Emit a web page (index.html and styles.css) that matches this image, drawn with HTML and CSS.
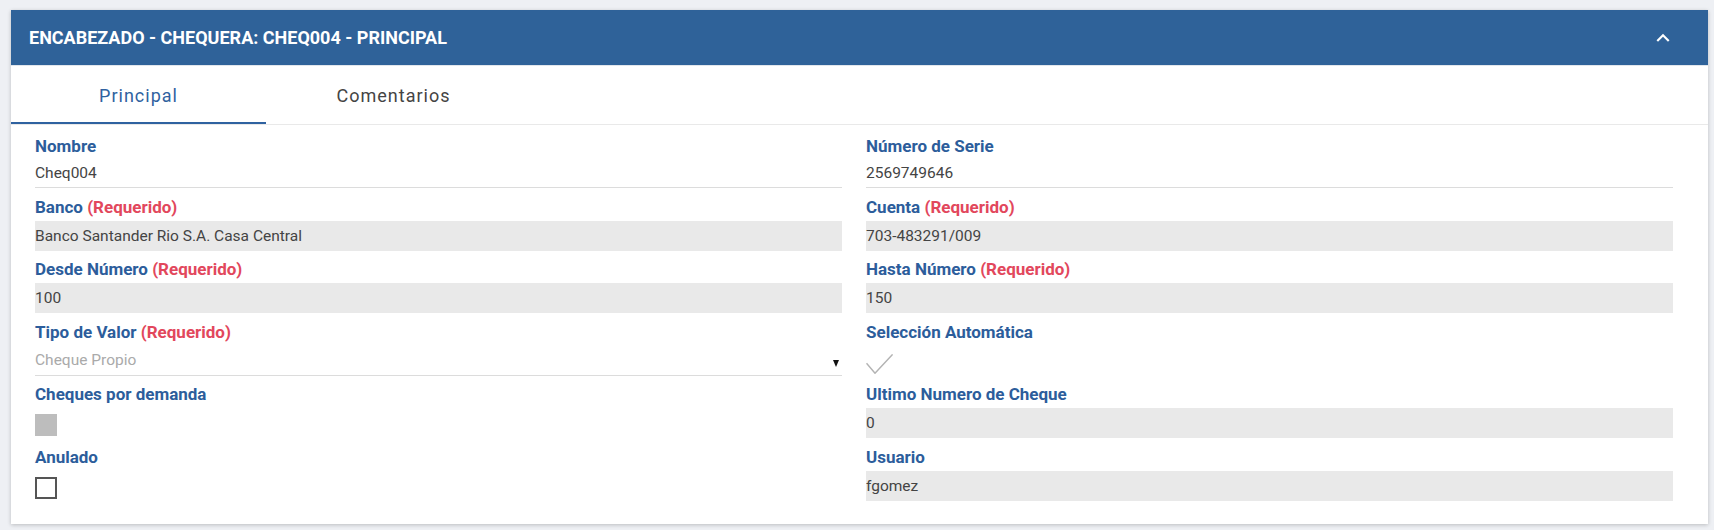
FILE: index.html
```html
<!DOCTYPE html>
<html lang="es">
<head>
<meta charset="utf-8">
<title>Chequera</title>
<link rel="stylesheet" href="styles.css">
</head>
<body>
<div class="page">
  <div class="card">
    <div class="card-header">
      <span class="title">ENCABEZADO - CHEQUERA: CHEQ004 - PRINCIPAL</span>
      <svg class="chev" viewBox="0 0 24 24"><path d="M12 8l-6 6 1.41 1.41L12 10.83l4.59 4.58L18 14z"/></svg>
    </div>
    <div class="tabs">
      <div class="tab active">Principal</div>
      <div class="tab">Comentarios</div>
    </div>
    <div class="form">
      <div class="field">
        <div class="label">Nombre</div>
        <div class="input-line">Cheq004</div>
      </div>
      <div class="field">
        <div class="label">Número de Serie</div>
        <div class="input-line">2569749646</div>
      </div>

      <div class="field">
        <div class="label">Banco <span class="req">(Requerido)</span></div>
        <div class="box">Banco Santander Rio S.A. Casa Central</div>
      </div>
      <div class="field">
        <div class="label">Cuenta <span class="req">(Requerido)</span></div>
        <div class="box">703-483291/009</div>
      </div>

      <div class="field">
        <div class="label">Desde Número <span class="req">(Requerido)</span></div>
        <div class="box">100</div>
      </div>
      <div class="field">
        <div class="label">Hasta Número <span class="req">(Requerido)</span></div>
        <div class="box">150</div>
      </div>

      <div class="field">
        <div class="label">Tipo de Valor <span class="req">(Requerido)</span></div>
        <div class="select"><span>Cheque Propio</span><span class="arrow"></span></div>
      </div>
      <div class="field">
        <div class="label">Selección Automática</div>
        <div class="slot slot-check">
          <svg class="check" viewBox="0 0 27 20"><polyline points="0.5,9.3 9,19.2 26.6,0.4"/></svg>
        </div>
      </div>

      <div class="field">
        <div class="label">Cheques por demanda</div>
        <div class="slot slot-cb"><div class="cb-disabled"></div></div>
      </div>
      <div class="field">
        <div class="label">Ultimo Numero de Cheque</div>
        <div class="box">0</div>
      </div>

      <div class="field">
        <div class="label">Anulado</div>
        <div class="slot slot-cb"><div class="cb"></div></div>
      </div>
      <div class="field">
        <div class="label">Usuario</div>
        <div class="box">fgomez</div>
      </div>
    </div>
  </div>
</div>
</body>
</html>
```
FILE: styles.css
```css
html, body {
  margin: 0;
  padding: 0;
}
body {
  background: #eef0f4;
  font-family: Roboto, "Liberation Sans", Arial, sans-serif;
  width: 1714px;
  height: 530px;
  overflow: hidden;
}
.page {
  padding: 10px 6px 6px 11px;
}
.card {
  background: #fff;
  box-shadow: 0 1px 4px rgba(0, 0, 0, 0.22);
}
.card-header {
  height: 55px;
  background: #2f6299;
  border-bottom: 1px solid #e1e6ec;
  display: flex;
  align-items: center;
  justify-content: space-between;
  padding: 0 32px 0 18px;
}
.title {
  color: #fff;
  font-weight: 700;
  font-size: 18px;
}
.chev {
  width: 26px;
  height: 26px;
  fill: #fff;
}
.tabs {
  display: flex;
  border-bottom: 1px solid #e9e9e9;
}
.tab {
  width: 255px;
  height: 58px;
  display: flex;
  align-items: center;
  justify-content: center;
  font-size: 18px;
  letter-spacing: 1px;
  color: #444;
}
.tab.active {
  color: #2f62a0;
  box-shadow: inset 0 -2px 0 #2f62a0;
}
.form {
  display: grid;
  grid-template-columns: 1fr 1fr;
  column-gap: 24px;
  row-gap: 7.5px;
  padding: 10px 35px 23px 24px;
}
.label {
  font-size: 17px;
  font-weight: 700;
  line-height: 20px;
  padding-top: 1px;
  margin-bottom: 4px;
  color: #2c5d9b;
}
.req {
  color: #e2475c;
}
.input-line {
  height: 27px;
  line-height: 27px;
  border-bottom: 1px solid #dcdcdc;
  color: #444;
  font-size: 15.5px;
}
.box {
  height: 30px;
  line-height: 30px;
  background: #e9e9e9;
  color: #444;
  font-size: 15.5px;
}
.select {
  height: 29px;
  line-height: 29px;
  border-bottom: 1px solid #dcdcdc;
  display: flex;
  justify-content: space-between;
  color: #aaa;
  font-size: 15.5px;
}
.arrow {
  width: 0;
  height: 0;
  border-left: 3.5px solid transparent;
  border-right: 3.5px solid transparent;
  border-top: 7px solid #111;
  margin: 14px 3px 0 0;
}
.slot {
  height: 30px;
  box-sizing: border-box;
}
.slot-check {
  padding-top: 8px;
}
.slot-cb {
  padding-top: 6px;
}
.check {
  display: block;
  width: 27px;
  height: 20px;
  fill: none;
  stroke: #b3b3b3;
  stroke-width: 1.5;
}
.cb-disabled {
  width: 22px;
  height: 22px;
  background: #bdbdbd;
}
.cb {
  width: 22px;
  height: 22px;
  box-sizing: border-box;
  border: 2px solid #555;
}
```
